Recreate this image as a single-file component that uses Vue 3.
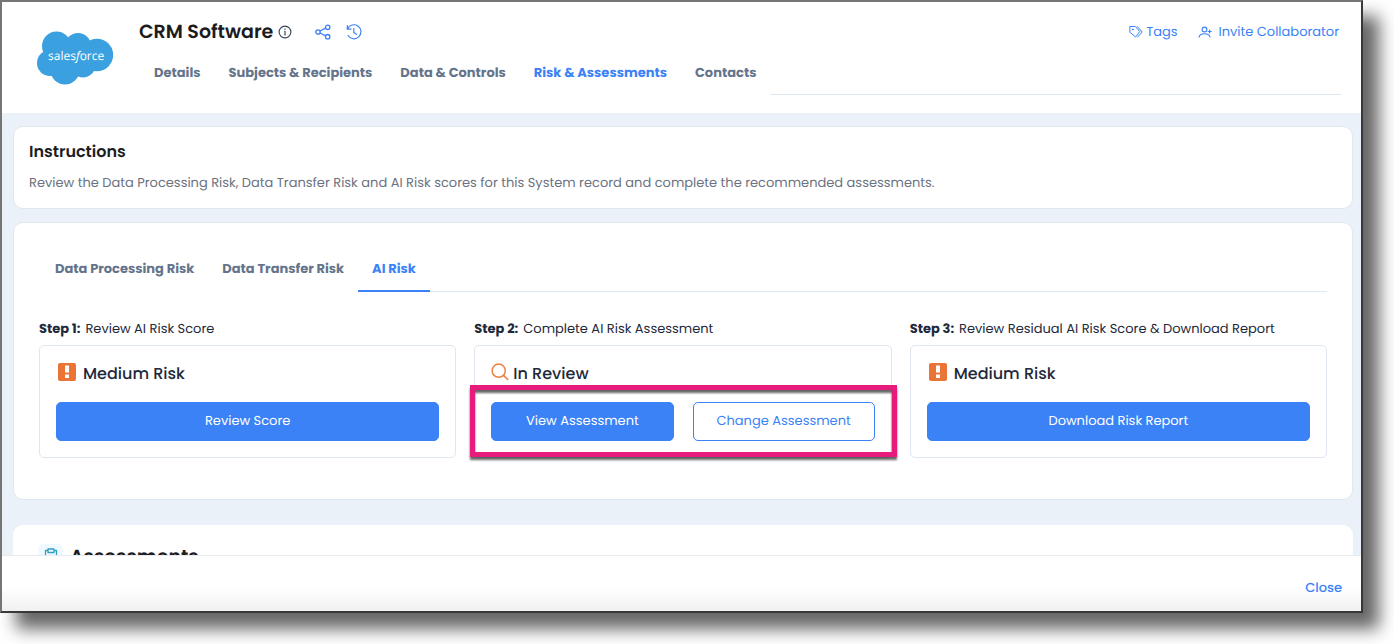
<script setup>
import { ref } from 'vue'

const sections = ['Details', 'Subjects & Recipients', 'Data & Controls', 'Risk & Assessments', 'Contacts']
const activeSection = ref('Risk & Assessments')

const risks = ['Data Processing Risk', 'Data Transfer Risk', 'AI Risk']
const activeRisk = ref('AI Risk')

const steps = [
  {
    label: 'Step 1:',
    text: 'Review AI Risk Score',
    status: 'Medium Risk',
    icon: 'alert',
    actions: [{ text: 'Review Score', kind: 'solid' }],
  },
  {
    label: 'Step 2:',
    text: 'Complete AI Risk Assessment',
    status: 'In Review',
    icon: 'search',
    highlighted: true,
    actions: [
      { text: 'View Assessment', kind: 'solid' },
      { text: 'Change Assessment', kind: 'outline' },
    ],
  },
  {
    label: 'Step 3:',
    text: 'Review Residual AI Risk Score & Download Report',
    status: 'Medium Risk',
    icon: 'alert',
    actions: [{ text: 'Download Risk Report', kind: 'solid' }],
  },
]
</script>

<template>
  <div class="page">
    <div class="window">
      <header class="header">
        <svg class="logo" viewBox="0 0 76 54" role="img" aria-label="salesforce">
          <g fill="#3aa0e0">
            <circle cx="19.500" cy="15" r="14.500" />
            <circle cx="41" cy="15" r="13" />
            <circle cx="60" cy="24" r="16.200" />
            <circle cx="13" cy="32" r="13" />
            <circle cx="28" cy="39" r="14.500" />
            <circle cx="46" cy="34" r="12.500" />
            <path d="M14 18h44v20H14z" />
          </g>
          <text x="11" y="28.500" class="logo-text">sales<tspan font-style="italic">f</tspan>orce</text>
        </svg>
        <div class="head-main">
          <div class="title-row">
            <h1>CRM Software</h1>
            <button class="icon-btn info" aria-label="Information">
              <svg width="14" height="14" viewBox="0 0 14 14" fill="none" stroke="#334155" stroke-width="1.100">
                <circle cx="7" cy="7" r="5.900" />
                <path d="M7 6v4" stroke-width="1.100" />
                <path d="M6 6.300h1M6 10h2" stroke-width=".5" />
                <circle cx="7" cy="4.200" r=".7" fill="#334155" stroke="none" />
              </svg>
            </button>
            <button class="icon-btn share" aria-label="Share">
              <svg width="16" height="16" viewBox="0 0 16 16" fill="none" stroke="#3b82f6" stroke-width="1.300">
                <circle cx="3" cy="8" r="2.200" />
                <circle cx="12.700" cy="3.300" r="2.200" />
                <circle cx="12.700" cy="12.700" r="2.200" />
                <path d="M5 7l5.700-2.800M5 9l5.700 2.800" />
              </svg>
            </button>
            <button class="icon-btn history" aria-label="History">
              <svg width="16" height="16" viewBox="0 0 16 16" fill="none" stroke="#3b82f6" stroke-width="1.200" stroke-linecap="round" stroke-linejoin="round">
                <path d="M1.300 1.500v3.700H5M1.500 5A7 7 0 1 1 2 11.500" />
                <path d="M7.800 4.500v4l2.600 1.800" />
              </svg>
            </button>
            <div class="head-actions">
              <button class="link-btn">
                <svg width="14" height="14" viewBox="0 0 14 14" fill="none" stroke="#3b82f6" stroke-width="1" stroke-linejoin="round" stroke-linecap="round">
                  <path d="M1.200 1.500h5.100L10.800 6.500 6.600 12 1.200 7.500z" />
                  <path d="M8.300 1.500L13.200 7 8.800 12" />
                  <circle cx="3.800" cy="4.400" r=".5" fill="#3b82f6" />
                </svg>
                Tags
              </button>
              <button class="link-btn invite">
                <svg width="14" height="14" viewBox="0 0 14 14" fill="none" stroke="#3b82f6" stroke-width="1.100" stroke-linecap="round">
                  <circle cx="6.500" cy="4.500" r="2.400" />
                  <path d="M1 12.200c.4-2.500 2.500-3.500 5.500-3.500s5.100 1 5.500 3.500M11.700 5v3M10.200 6.500h3" />
                </svg>
                Invite Collaborator
              </button>
            </div>
          </div>
          <nav class="tabs sections">
            <button
              v-for="s in sections"
              :key="s"
              class="tab"
              :class="{ active: s === activeSection }"
              @click="activeSection = s"
            >{{ s }}</button>
            <span class="rule"></span>
          </nav>
        </div>
      </header>

      <main class="content">
        <section class="card instructions">
          <h2>Instructions</h2>
          <p>Review the Data Processing Risk, Data Transfer Risk and AI Risk scores for this System record and complete the recommended assessments.</p>
        </section>

        <section class="card risk">
          <nav class="tabs risks">
            <button
              v-for="r in risks"
              :key="r"
              class="tab"
              :class="{ active: r === activeRisk }"
              @click="activeRisk = r"
            >{{ r }}</button>
            <span class="rule"></span>
          </nav>
          <div class="steps">
            <div v-for="step in steps" :key="step.label" class="step">
              <p class="step-label"><strong>{{ step.label }}</strong>{{ step.text }}</p>
              <div class="step-box">
                <h3 :class="step.icon">
                  <svg v-if="step.icon === 'alert'" width="18" height="18" viewBox="0 0 18 18">
                    <rect width="18" height="18" rx="2" fill="#e97435" />
                    <path d="M7 2.500h4v7H7zM7 11.500h4v3.500H7z" fill="#fff" />
                  </svg>
                  <svg v-else width="18" height="18" viewBox="0 0 18 18" fill="none" stroke="#f0803c" stroke-width="1.500" stroke-linecap="round">
                    <circle cx="7.700" cy="7.700" r="6.600" />
                    <path d="M12.400 12.400l4.300 4" />
                  </svg>
                  {{ step.status }}
                </h3>
                <div class="actions">
                  <button v-for="a in step.actions" :key="a.text" class="btn" :class="a.kind">{{ a.text }}</button>
                </div>
                <span v-if="step.highlighted" class="highlight"></span>
              </div>
            </div>
          </div>
        </section>

        <section class="card assessments">
          <h2>
            <span class="badge">
              <svg width="14" height="16" viewBox="0 0 14 16" fill="none" stroke="#2f9fc0" stroke-width="1.300" stroke-linejoin="round">
                <path d="M4 2.500H1.500V15h11V2.500H10" />
                <path d="M4 1h6v3.500H4z" />
              </svg>
            </span>
            Assessments
          </h2>
        </section>
      </main>

      <footer class="footer">
        <button class="close">Close</button>
      </footer>
    </div>
  </div>
</template>

<style>
body {
  margin: 0;
  background: #fff;
}
</style>

<style scoped>
.page {
  box-sizing: border-box;
  height: 100vh;
  padding: 0 31px 31px 0;
  overflow: hidden;
  font-family: Poppins, Inter, 'Open Sans', sans-serif;
  font-size: 13px;
  line-height: 20px;
  text-rendering: geometricPrecision;
  color: #1e293b;
}
.page *,
.page *::before {
  box-sizing: border-box;
}
h1, h2, h3, p {
  margin: 0;
}
button {
  font: inherit;
  text-rendering: inherit;
  color: inherit;
  background: none;
  border: 0;
  padding: 0;
  cursor: pointer;
  white-space: nowrap;
}
svg {
  display: block;
  flex: none;
}
.window {
  display: flex;
  flex-direction: column;
  height: 100%;
  border: 2px solid;
  border-color: #757575 #383838 #383838 #757575;
  background: #fff;
  box-shadow: 16px 16px 16px rgba(0, 0, 0, 0.6);
}
.header {
  display: flex;
  flex: none;
  gap: 25px;
  height: 111px;
  padding: 15px 20px 18px 35px;
}
.logo {
  width: 76px;
  height: 54px;
  margin-top: 14px;
}
.logo-text {
  font: 12px 'Open Sans', sans-serif;
  fill: #fff;
}
.head-main {
  display: flex;
  flex: 1;
  flex-direction: column;
  justify-content: space-between;
  min-width: 0;
}
.title-row {
  display: flex;
  align-items: center;
  height: 30px;
  padding-left: 1px;
}
h1 {
  font-size: 19px;
  line-height: 30px;
  font-weight: 600;
  color: #1c1c1e;
}
.info {
  margin-left: 5px;
}
.share {
  margin-left: 23px;
}
.history {
  margin-left: 15px;
}
.head-actions {
  display: flex;
  gap: 20px;
  margin-left: auto;
  padding-right: 2px;
}
.link-btn {
  display: flex;
  align-items: center;
  gap: 3px;
  color: #3b82f6;
}
.invite {
  gap: 7px;
}
.tabs {
  display: flex;
  align-items: stretch;
  padding-left: 2px;
}
.tab {
  padding: 0 14px;
  font-weight: 700;
  color: #64748b;
}
.tab.active {
  color: #3b82f6;
}
.rule {
  flex: 1;
  border-bottom: 1px solid #dfe7ef;
}
.sections {
  height: 45px;
}
.content {
  flex: 1;
  min-height: 0;
  padding: 13px 8px 0 11px;
  overflow: hidden;
  background: #eaf1f9;
}
.card {
  background: #fff;
  border: 1px solid #dfe7ef;
  border-radius: 10px;
}
.instructions {
  padding: 13px 15px 15px;
}
.instructions h2 {
  font-size: 16px;
  line-height: 24px;
  font-weight: 600;
  color: #1c1c1e;
}
.instructions p {
  margin-top: 9px;
  color: #6b7280;
}
.risk {
  margin-top: 13px;
  padding: 21px 25px 41px;
}
.risks {
  height: 48px;
}
.risks .tab {
  padding-top: 4px;
  border-bottom: 2px solid transparent;
}
.risks .tab.active {
  border-bottom-color: #3b82f6;
}
.steps {
  display: grid;
  grid-template-columns: repeat(3, 1fr);
  gap: 18px;
  margin-top: 27px;
}
.step-label {
  white-space: nowrap;
}
.step-label strong {
  margin-right: 5px;
}
.step-box {
  position: relative;
  margin-top: 6px;
  padding: 15px 16px 16px;
  border: 1px solid #e0e6f0;
  border-radius: 5px;
}
h3 {
  display: flex;
  align-items: flex-start;
  gap: 7px;
  padding-left: 2px;
  font-size: 16px;
  line-height: 26px;
  font-weight: 500;
}
h3 svg {
  margin-top: 2px;
}
h3.search {
  gap: 4px;
  padding-left: 0;
}
.actions {
  display: flex;
  gap: 19px;
  margin-top: 15px;
}
.btn {
  flex: 1;
  height: 39px;
  padding-bottom: 2px;
  border: 1px solid #3b82f6;
  border-radius: 5px;
}
.solid {
  background: #3b82f6;
  color: #fff;
}
.outline {
  background: #fff;
  color: #3b82f6;
}
.highlight {
  position: absolute;
  inset: 39px -6px 0 -5px;
  border: 5px solid #e61b7b;
  filter: drop-shadow(0 3px 1px rgba(0, 0, 0, 0.6));
  pointer-events: none;
}
.assessments {
  margin-top: 25px;
  padding: 18px 24px;
  border-color: #fff;
}
.assessments h2 {
  display: flex;
  align-items: flex-start;
  gap: 7px;
  font-size: 19px;
  line-height: 26px;
  font-weight: 600;
  color: #1c1c1e;
}
.badge {
  display: flex;
  justify-content: center;
  width: 25px;
  padding: 4px 0;
  border-radius: 5px;
  background: #f0f9ff;
}
.footer {
  display: flex;
  flex: none;
  align-items: center;
  justify-content: flex-end;
  height: 56px;
  padding: 8px 19px 0;
  border-top: 1px solid #e8eaed;
  background: linear-gradient(#fff 55%, #f1f1f1);
}
.close {
  font-weight: 500;
  color: #3b82f6;
}
</style>
